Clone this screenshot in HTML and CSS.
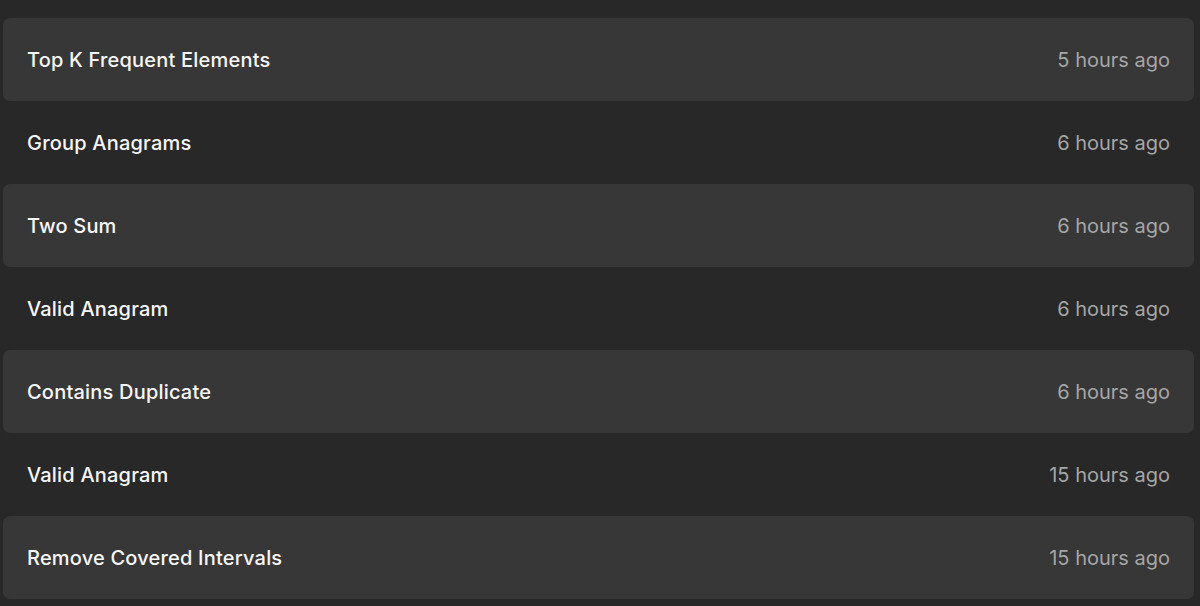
FILE: index.html
```html
<!DOCTYPE html>
<html lang="en">
<head>
    <meta charset="UTF-8">
    <meta name="viewport" content="width=device-width, initial-scale=1.0">
    <title>Recent Submissions</title>
    <link rel="stylesheet" href="styles.css">
</head>
<body>
    <ul class="submissions">
        <li class="submission">
            <span class="submission-title">Top K Frequent Elements</span>
            <span class="submission-time">5 hours ago</span>
        </li>
        <li class="submission">
            <span class="submission-title">Group Anagrams</span>
            <span class="submission-time">6 hours ago</span>
        </li>
        <li class="submission">
            <span class="submission-title">Two Sum</span>
            <span class="submission-time">6 hours ago</span>
        </li>
        <li class="submission">
            <span class="submission-title">Valid Anagram</span>
            <span class="submission-time">6 hours ago</span>
        </li>
        <li class="submission">
            <span class="submission-title">Contains Duplicate</span>
            <span class="submission-time">6 hours ago</span>
        </li>
        <li class="submission">
            <span class="submission-title">Valid Anagram</span>
            <span class="submission-time">15 hours ago</span>
        </li>
        <li class="submission">
            <span class="submission-title">Remove Covered Intervals</span>
            <span class="submission-time">15 hours ago</span>
        </li>
    </ul>
</body>
</html>
```

FILE: styles.css
```css
body {
    margin: 0;
    padding: 0;
    background-color: #282828;
    font-family: Inter, "Noto Sans", sans-serif;
    overflow: hidden;
}

.submissions {
    list-style: none;
    margin: 0;
    padding: 18px 6px 0 3px;
    display: flex;
    flex-direction: column;
}

.submission {
    display: flex;
    justify-content: space-between;
    align-items: center;
    height: 83px;
    padding: 0 24px;
    border-radius: 7px;
}

/* linhas alternadas */
.submission:nth-child(odd) {
    background-color: #373737;
}

.submission-title {
    color: #f7f7f7;
    font-size: 20px;
    font-weight: 500;
    letter-spacing: 0.2px;
}

.submission-time {
    color: #a6a6a6;
    font-size: 20px;
}
```
